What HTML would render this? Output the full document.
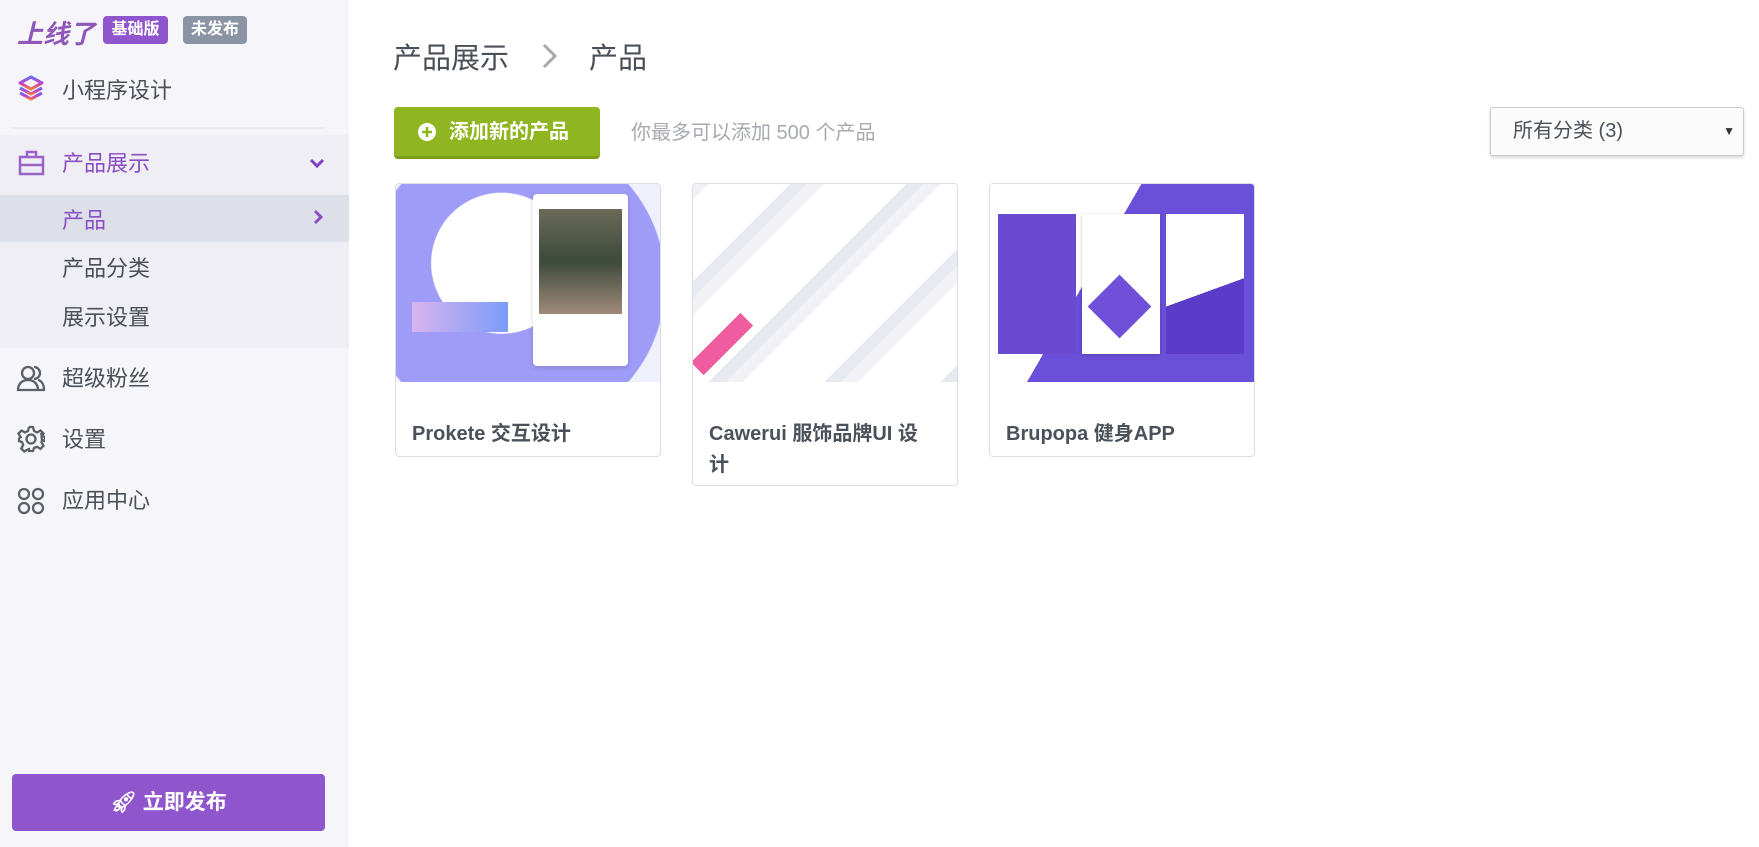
<!DOCTYPE html>
<html><head><meta charset="utf-8"><style>
*{box-sizing:border-box;margin:0;padding:0}
body{width:1759px;height:847px;overflow:hidden;background:#fff;font-family:"Liberation Sans","Noto Sans CJK SC",sans-serif;color:#555;position:relative}
.sb{position:absolute;left:0;top:0;width:349px;height:847px;background:#f6f6fa}
.a{position:absolute}
.badge{position:absolute;top:16px;height:28px;border-radius:4px;color:#fff;font-weight:bold;font-size:16px;line-height:28px;text-align:center}
.nav{position:absolute;left:62px;font-size:22px;color:#4a4f58;line-height:30px}
.card{position:absolute;top:183px;width:266px;border:1px solid #dcdde2;border-radius:4px;background:#fff;overflow:hidden}
.card .img{height:198px}
.card .t{padding:37px 16px 0 16px;font-size:20px;font-weight:bold;color:#4b515a;line-height:31px;white-space:nowrap}
</style></head><body>
<div class="sb">
<div class="a" style="left:17px;top:14px;font-size:26px;font-weight:bold;font-style:italic;color:#8e57b8">上线了</div>
<div class="badge" style="left:103px;width:65px;background:#8f55cc">基础版</div>
<div class="badge" style="left:183px;width:64px;background:#8b94a3">未发布</div>
<svg class="a" style="left:17px;top:74px" width="28" height="30" viewBox="0 0 28 30"><defs><linearGradient id="g" x1="0" y1="0" x2="0" y2="1"><stop offset="0" stop-color="#6b6cf0"/><stop offset=".5" stop-color="#c040d0"/><stop offset="1" stop-color="#f07a40"/></linearGradient></defs><g fill="none" stroke="url(#g)" stroke-width="3" stroke-linejoin="round"><path d="M14 3L25 9 14 15 3 9Z"/><path d="M3 14l11 6 11-6"/><path d="M3 19l11 6 11-6"/></g></svg>
<div class="nav" style="top:76px">小程序设计</div>
<div class="a" style="left:12px;top:127px;width:313px;height:2px;background:#ebebf0"></div>
<div class="a" style="left:0;top:135px;width:349px;height:213px;background:#eeeef4"></div>
<svg class="a" style="left:18px;top:150px" width="27" height="26" viewBox="0 0 27 26"><g fill="none" stroke="#9a63c8" stroke-width="2.5"><rect x="2" y="7" width="23" height="17"/><path d="M9 7V2h9v5M2 15h23"/></g></svg>
<div class="nav" style="top:149px;color:#8a4fc4">产品展示</div>
<svg class="a" style="left:309px;top:158px" width="16" height="12"><path d="M2 2l6 6 6-6" fill="none" stroke="#7f40c0" stroke-width="3"/></svg>
<div class="a" style="left:0;top:195px;width:349px;height:47px;background:#dde0e8"></div>
<div class="nav" style="top:206px;color:#8a4fc4">产品</div>
<svg class="a" style="left:313px;top:209px" width="12" height="16"><path d="M2 2l6 6-6 6" fill="none" stroke="#8a4fc4" stroke-width="3"/></svg>
<div class="nav" style="top:254px">产品分类</div>
<div class="nav" style="top:303px">展示设置</div>
<svg class="a" style="left:16px;top:364px" width="30" height="28" viewBox="0 0 30 28"><g fill="none" stroke="#5a5f68" stroke-width="2.3"><circle cx="12" cy="9" r="6"/><path d="M2 26c0-6 4-10 10-10s10 4 10 10z"/><path d="M18 3a6 6 0 0 1 0 12M22 16c4 1 6 5 6 10h-6"/></g></svg>
<div class="nav" style="top:364px">超级粉丝</div>
<svg class="a" style="left:17px;top:425px" width="28" height="28" viewBox="0 0 28 28"><g fill="none" stroke="#5a5f68" stroke-width="2.3"><circle cx="14" cy="14" r="4.5"/><path d="M12 2h4l1 4 3 1.5 3.5-2 3 3-2 3.5L25 15l3 1v-4l-3-1-1.2-3M12 2l-1 4-3 1.5-3.5-2-3 3 2 3.5L3 12l-1 2v2l3 1 1.2 3-2 3.5 3 3 3.5-2L12 24l0 2h4l1-3 3-1.2 3.5 2 3-3-2-3.5L25 15"/></g></svg>
<div class="nav" style="top:425px">设置</div>
<svg class="a" style="left:17px;top:487px" width="28" height="28" viewBox="0 0 28 28"><g fill="none" stroke="#5a5f68" stroke-width="2.3"><circle cx="7" cy="7" r="5"/><circle cx="21" cy="7" r="5"/><circle cx="7" cy="21" r="5"/><circle cx="21" cy="21" r="5"/></g></svg>
<div class="nav" style="top:486px">应用中心</div>
<div class="a" style="left:12px;top:774px;width:313px;height:57px;background:#8f55cc;border-radius:4px;color:#fff;font-size:21px;font-weight:bold;text-align:center;line-height:57px">🚀&#xFE0E; 立即发布</div>
</div>

<div class="a" style="left:393px;top:35px;font-size:29px;color:#4a4f58">产品展示</div>
<svg class="a" style="left:541px;top:42px" width="18" height="28"><path d="M3 3l11 11-11 11" fill="none" stroke="#a5a8ae" stroke-width="3"/></svg>
<div class="a" style="left:589px;top:35px;font-size:29px;color:#4a4f58">产品</div>

<div class="a" style="left:394px;top:107px;width:206px;height:52px;background:#8fb520;border-radius:4px;border-bottom:3px solid #7a9c16;color:#fff;font-weight:bold;font-size:20px;line-height:50px;padding-left:55px">添加新的产品</div>
<svg class="a" style="left:417px;top:122px" width="20" height="20"><circle cx="10" cy="10" r="9" fill="#fff"/><path d="M10 5v10M5 10h10" stroke="#8fb520" stroke-width="2.5"/></svg>
<div class="a" style="left:631px;top:116px;font-size:20px;color:#a7aab0">你最多可以添加 500 个产品</div>

<div class="a" style="left:1490px;top:107px;width:254px;height:49px;border:1px solid #c8cace;border-radius:3px;box-shadow:0 2px 3px rgba(0,0,0,.15);background:#fbfbfb;font-size:20px;color:#4a4f58;line-height:47px;padding-left:22px">所有分类 (3)<span style="position:absolute;right:8px;top:0;font-size:12px;color:#333">▼</span></div>

<div class="card" style="left:395px">
<div class="img" style="background:radial-gradient(circle at 40% 40%,#fff 0 70px,transparent 71px),radial-gradient(circle at 45% 50%,#9f9cf8 0 150px,#eef0fb 151px);position:relative">
<div class="a" style="left:137px;top:10px;width:95px;height:172px;background:#fff;border-radius:4px;box-shadow:0 2px 6px rgba(0,0,0,.15)"><div style="margin:15px 6px;height:105px;background:linear-gradient(#6b6a58,#3d4a3a 50%,#a08a7a)"></div></div>
<div class="a" style="left:16px;top:118px;width:96px;height:30px;background:linear-gradient(90deg,#d8b4f0,#7b9cf8)"></div>
</div>
<div class="t">Prokete 交互设计</div><div style="height:6px"></div></div>

<div class="card" style="left:692px">
<div class="img" style="background:repeating-linear-gradient(-45deg,#e8eaf2 0 12px,#fff 12px 70px,#f2f2f6 70px 82px);position:relative">
<div class="a" style="left:8px;top:125px;width:18px;height:70px;background:#f05ca0;transform:rotate(45deg);left:20px"></div>
</div>
<div class="t">Cawerui 服饰品牌UI 设<br>计</div><div style="height:4px"></div></div>

<div class="card" style="left:989px">
<div class="img" style="background:linear-gradient(120deg,#fff 0 40%,#6a4fd8 40%);position:relative">
<div class="a" style="left:8px;top:30px;width:78px;height:140px;background:#6a4ad0"></div>
<div class="a" style="left:92px;top:30px;width:78px;height:140px;background:#fff;box-shadow:0 1px 4px rgba(0,0,0,.2)"><div style="margin:70px 15px;width:45px;height:45px;background:#7050d8;transform:rotate(45deg)"></div></div>
<div class="a" style="left:176px;top:30px;width:78px;height:140px;background:linear-gradient(160deg,#fff 55%,#5a3cc8 55%)"></div>
</div>
<div class="t">Brupopa 健身APP</div><div style="height:6px"></div></div>
</body></html>
